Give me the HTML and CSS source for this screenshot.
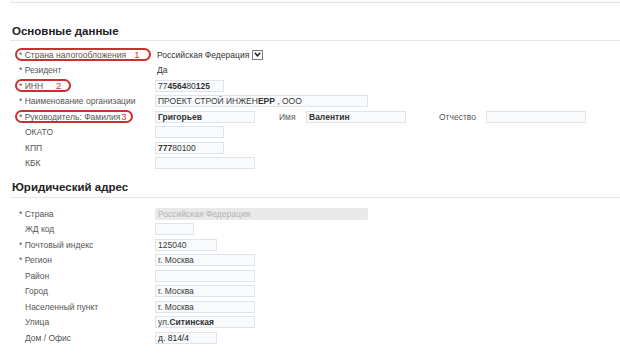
FILE: index.html
```html
<!DOCTYPE html>
<html lang="ru">

<head>
  <meta charset="UTF-8" />
  <meta name="viewport" content="width=device-width, initial-scale=1" />
  <title>Основные данные</title>
  <link rel="stylesheet" href="styles.css">
</head>

<body>
  <div class="page">
    <div class="topbar"></div>

    <!-- Основные данные -->
    <section class="block">
      <h2 class="block-title">Основные данные</h2>
      <div class="fields">
        <div class="row">
          <div class="label"><span class="mark mark-1">* Страна налогообложения<span class="num">1</span></span></div>
          <div class="value">
            <span class="select-text">Российская Федерация</span>
            <span class="select-btn">
              <svg width="7" height="5" viewBox="0 0 7 5"><path d="M0.8 0.8 L3.5 3.8 L6.2 0.8" fill="none" stroke="#222" stroke-width="1.5"/></svg>
            </span>
          </div>
        </div>
        <div class="row">
          <div class="label">* Резидент</div>
          <div class="value"><span class="plain-value">Да</span></div>
        </div>
        <div class="row">
          <div class="label"><span class="mark mark-2">* ИНН<span class="num">2</span></span></div>
          <div class="value"><span class="field w-short">77<b>4564</b>80<b>125</b></span></div>
        </div>
        <div class="row">
          <div class="label">* Наименование организации</div>
          <div class="value"><span class="field w-long">ПРОЕКТ СТРОЙ ИНЖЕН<b>ЕРР</b> , ООО</span></div>
        </div>
        <div class="row">
          <div class="label"><span class="mark mark-3">* Руководитель: Фамилия<span class="num">3</span></span></div>
          <div class="value">
            <span class="field w-mid"><b>Григорьев</b></span>
            <span class="sub-label sub-name">Имя</span>
            <span class="field w-mid"><b>Валентин</b></span>
            <span class="sub-label sub-patronymic">Отчество</span>
            <span class="field w-mid"></span>
          </div>
        </div>
        <div class="row">
          <div class="label no-star">ОКАТО</div>
          <div class="value"><span class="field w-short"></span></div>
        </div>
        <div class="row">
          <div class="label no-star">КПП</div>
          <div class="value"><span class="field w-short"><b>777</b>80100</span></div>
        </div>
        <div class="row">
          <div class="label no-star">КБК</div>
          <div class="value"><span class="field w-mid"></span></div>
        </div>
      </div>
    </section>

    <!-- Юридический адрес -->
    <section class="block block-address">
      <h2 class="block-title">Юридический адрес</h2>
      <div class="fields">
        <div class="row">
          <div class="label">* Страна</div>
          <div class="value"><span class="field w-long disabled">Российская Федерация</span></div>
        </div>
        <div class="row">
          <div class="label no-star">ЖД код</div>
          <div class="value"><span class="field w-tiny"></span></div>
        </div>
        <div class="row">
          <div class="label">* Почтовый индекс</div>
          <div class="value"><span class="field w-post">125040</span></div>
        </div>
        <div class="row">
          <div class="label">* Регион</div>
          <div class="value"><span class="field w-mid">г. Москва</span></div>
        </div>
        <div class="row">
          <div class="label no-star">Район</div>
          <div class="value"><span class="field w-mid"></span></div>
        </div>
        <div class="row">
          <div class="label no-star">Город</div>
          <div class="value"><span class="field w-mid">г. Москва</span></div>
        </div>
        <div class="row">
          <div class="label no-star">Населенный пункт</div>
          <div class="value"><span class="field w-mid">г. Москва</span></div>
        </div>
        <div class="row">
          <div class="label no-star">Улица</div>
          <div class="value"><span class="field w-mid">ул.<b>Ситинская</b></span></div>
        </div>
        <div class="row">
          <div class="label no-star">Дом / Офис</div>
          <div class="value"><span class="field w-post dark">д. 814/4</span></div>
        </div>
      </div>
    </section>
  </div>
</body>

</html>
```

FILE: styles.css
```css
/* Base */
* {
  box-sizing: border-box;
}

body {
  margin: 0;
  padding: 0;
  background: #fff;
  font-family: 'Liberation Sans', Arial, sans-serif;
  font-size: 8.5px;
  color: #555;
  overflow: hidden;
}

.page {
  margin-left: 10px;
}

.topbar {
  height: 3px;
  background: #fafbfc;
  border-bottom: 1px solid #e3e7eb;
}

/* Section blocks */
.block-title {
  margin: 20px 0 0;
  padding: 0 0 1px 2px;
  font-size: 11.5px;
  line-height: 16px;
  font-weight: 700;
  color: #222;
  border-bottom: 1px solid #e2e6ea;
}

.block-address .block-title {
  margin-top: 8px;
  padding-bottom: 2px;
}

.fields {
  padding-top: 6px;
}

.block-address .fields {
  padding-top: 8px;
}

.row {
  display: grid;
  grid-template-columns: 145px 1fr;
  align-items: center;
  height: 15.5px;
}

.label {
  padding-left: 9px;
  white-space: nowrap;
  color: #555;
}

.label.no-star {
  padding-left: 15px;
}

.value {
  display: flex;
  align-items: center;
  white-space: nowrap;
  color: #333;
}

/* Red annotation rings */
.mark {
  display: inline-flex;
  align-items: center;
  height: 13px;
  margin-left: -4px;
  padding-left: 2px;
  border: 2px solid #c9302f;
  border-radius: 8px;
}

.mark .num {
  color: #d8322e;
  font-size: 9.5px;
}

.mark-1 { padding-right: 10px; }
.mark-1 .num { margin-left: 8px; }
.mark-2 { padding-right: 8px; }
.mark-2 .num { margin-left: 13px; }
.mark-3 { padding-right: 4px; }
.mark-3 .num { margin-left: 1px; }

/* Values */
.plain-value,
.select-text {
  padding-left: 2px;
}

.select-btn {
  display: inline-flex;
  align-items: center;
  justify-content: center;
  width: 11px;
  height: 10px;
  margin-left: 3px;
  border: 1px solid #7d7d7d;
  background: #fff;
}

.field {
  display: inline-block;
  height: 12px;
  line-height: 10px;
  padding: 0 2px;
  background: #f8fafc;
  border: 1px solid #dfe4ea;
  color: #3a3a3a;
  overflow: hidden;
}

.field b {
  font-weight: 700;
  color: #333;
}

.field.dark {
  color: #222;
}

.field.disabled {
  background: #e9e9e9;
  border-color: #e9e9e9;
  border-radius: 2px;
  color: #b3b3b3;
}

.w-tiny { width: 39px; }
.w-post { width: 62px; }
.w-short { width: 69px; }
.w-mid { width: 100px; }
.w-long { width: 213px; }

.sub-label {
  color: #555;
}

.sub-name {
  width: 27px;
  margin-left: 24px;
}

.sub-patronymic {
  width: 47px;
  margin-left: 33px;
}
```
